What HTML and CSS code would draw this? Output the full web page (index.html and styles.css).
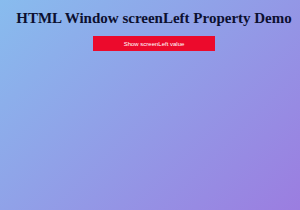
FILE: index.html
```html
<!DOCTYPE html>
<html>
<head>
<meta charset="utf-8">
<link rel="stylesheet" href="styles.css">
</head>
<body>
<div class="page">
  <h1 class="title">HTML Window screenLeft Property Demo</h1>
  <button class="btn">Show screenLeft value</button>
</div>
</body>
</html>
```
FILE: styles.css
```css
html, body {
  margin: 0;
  padding: 0;
  height: 100%;
}
body {
  background: linear-gradient(135deg, #88bcee 0%, #9b7de0 100%);
  min-height: 210px;
}
.page {
  display: flex;
  flex-direction: column;
  align-items: center;
  padding-top: 10px;
  padding-left: 8px;
}
.title {
  font-family: "Liberation Serif", "Times New Roman", serif;
  font-weight: bold;
  font-size: 15px;
  color: #0c1030;
  margin: 0;
  line-height: 17px;
}
.btn {
  margin-top: 9px;
  width: 122px;
  height: 15px;
  background: #ec0a2c;
  color: #fff;
  border: none;
  font-family: "Liberation Sans", Arial, sans-serif;
  font-size: 6px;
  padding: 0;
}
```
